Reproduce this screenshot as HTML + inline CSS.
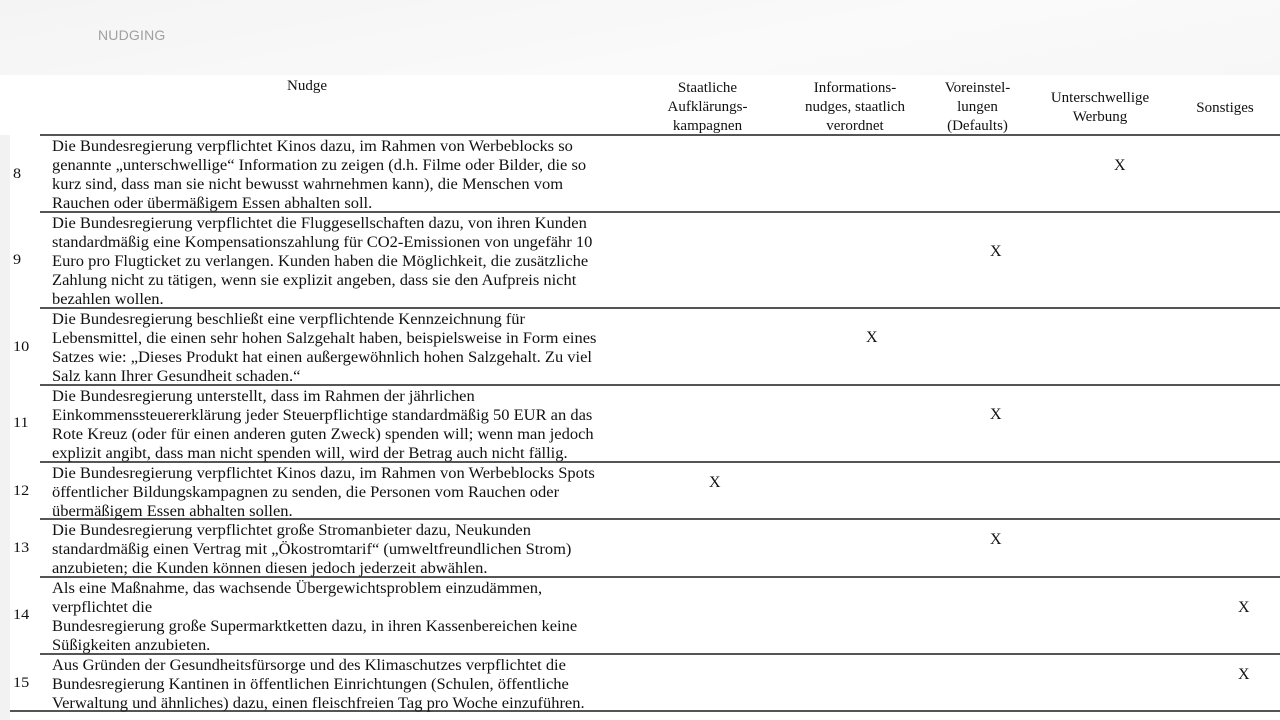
<!DOCTYPE html>
<html><head><meta charset="utf-8"><style>
*{margin:0;padding:0}
body{width:1280px;height:720px;overflow:hidden;background:#fff;position:relative;font-family:"Liberation Serif",serif;color:#111}
.hdr{position:absolute;left:0;top:0;width:1280px;height:75px;background:linear-gradient(170deg,#f4f4f4,#fafafa 60%,#f7f7f7)}
.title{position:absolute;left:98px;top:27px;font:14px "Liberation Sans",sans-serif;color:#a0a0a0;letter-spacing:.2px}
.strip{position:absolute;left:0;top:135px;width:10px;height:585px;background:#f2f2f2}
.ln{position:absolute;left:40px;width:1240px;height:2px;background:#555}
.t{position:absolute;left:52px;font-size:15.3px;line-height:19px;white-space:nowrap;transform:scaleX(1.077);transform-origin:0 0}
.n{position:absolute;left:13px;font-size:15px;transform:scaleX(1.08);transform-origin:0 0}
.x{position:absolute;font-size:16px}
.h{position:absolute;font-size:15px;line-height:19px;text-align:center;white-space:nowrap}
</style></head><body>
<div class="hdr"></div><div class="title">NUDGING</div>
<div class="strip"></div>
<div class="h" style="left:287px;top:77px">Nudge</div>
<div class="h" style="left:660px;top:79px;width:95px">Staatliche<br>Aufklärungs-<br>kampagnen</div>
<div class="h" style="left:790px;top:79px;width:130px">Informations-<br>nudges, staatlich<br>verordnet</div>
<div class="h" style="left:930px;top:79px;width:95px">Voreinstel-<br>lungen<br>(Defaults)</div>
<div class="h" style="left:1040px;top:89px;width:120px">Unterschwellige<br>Werbung</div>
<div class="h" style="left:1185px;top:99px;width:80px">Sonstiges</div>

<div class="ln" style="top:134px"></div>
<div class="ln" style="top:211px"></div>
<div class="ln" style="top:307px"></div>
<div class="ln" style="top:384px"></div>
<div class="ln" style="top:461px"></div>
<div class="ln" style="top:518px"></div>
<div class="ln" style="top:576px"></div>
<div class="ln" style="top:653px"></div>
<div class="ln" style="top:710px;left:10px;width:1270px"></div>

<div class="n" style="top:166px">8</div>
<div class="t" style="top:137px">Die Bundesregierung verpflichtet Kinos dazu, im Rahmen von Werbeblocks so<br>genannte „unterschwellige“ Information zu zeigen (d.h. Filme oder Bilder, die so<br>kurz sind, dass man sie nicht bewusst wahrnehmen kann), die Menschen vom<br>Rauchen oder übermäßigem Essen abhalten soll.</div>
<div class="x" style="left:1114px;top:157px">X</div>

<div class="n" style="top:252px">9</div>
<div class="t" style="top:214px">Die Bundesregierung verpflichtet die Fluggesellschaften dazu, von ihren Kunden<br>standardmäßig eine Kompensationszahlung für CO2-Emissionen von ungefähr 10<br>Euro pro Flugticket zu verlangen. Kunden haben die Möglichkeit, die zusätzliche<br>Zahlung nicht zu tätigen, wenn sie explizit angeben, dass sie den Aufpreis nicht<br>bezahlen wollen.</div>
<div class="x" style="left:990px;top:243px">X</div>

<div class="n" style="top:339px">10</div>
<div class="t" style="top:310px">Die Bundesregierung beschließt eine verpflichtende Kennzeichnung für<br>Lebensmittel, die einen sehr hohen Salzgehalt haben, beispielsweise in Form eines<br>Satzes wie: „Dieses Produkt hat einen außergewöhnlich hohen Salzgehalt. Zu viel<br>Salz kann Ihrer Gesundheit schaden.“</div>
<div class="x" style="left:866px;top:329px">X</div>

<div class="n" style="top:415px">11</div>
<div class="t" style="top:387px">Die Bundesregierung unterstellt, dass im Rahmen der jährlichen<br>Einkommenssteuererklärung jeder Steuerpflichtige standardmäßig 50 EUR an das<br>Rote Kreuz (oder für einen anderen guten Zweck) spenden will; wenn man jedoch<br>explizit angibt, dass man nicht spenden will, wird der Betrag auch nicht fällig.</div>
<div class="x" style="left:990px;top:406px">X</div>

<div class="n" style="top:483px">12</div>
<div class="t" style="top:464px">Die Bundesregierung verpflichtet Kinos dazu, im Rahmen von Werbeblocks Spots<br>öffentlicher Bildungskampagnen zu senden, die Personen vom Rauchen oder<br>übermäßigem Essen abhalten sollen.</div>
<div class="x" style="left:709px;top:474px">X</div>

<div class="n" style="top:540px">13</div>
<div class="t" style="top:521px">Die Bundesregierung verpflichtet große Stromanbieter dazu, Neukunden<br>standardmäßig einen Vertrag mit „Ökostromtarif“ (umweltfreundlichen Strom)<br>anzubieten; die Kunden können diesen jedoch jederzeit abwählen.</div>
<div class="x" style="left:990px;top:531px">X</div>

<div class="n" style="top:607px">14</div>
<div class="t" style="top:579px">Als eine Maßnahme, das wachsende Übergewichtsproblem einzudämmen,<br>verpflichtet die<br>Bundesregierung große Supermarktketten dazu, in ihren Kassenbereichen keine<br>Süßigkeiten anzubieten.</div>
<div class="x" style="left:1238px;top:599px">X</div>

<div class="n" style="top:675px">15</div>
<div class="t" style="top:656px">Aus Gründen der Gesundheitsfürsorge und des Klimaschutzes verpflichtet die<br>Bundesregierung Kantinen in öffentlichen Einrichtungen (Schulen, öffentliche<br>Verwaltung und ähnliches) dazu, einen fleischfreien Tag pro Woche einzuführen.</div>
<div class="x" style="left:1238px;top:666px">X</div>
</body></html>
